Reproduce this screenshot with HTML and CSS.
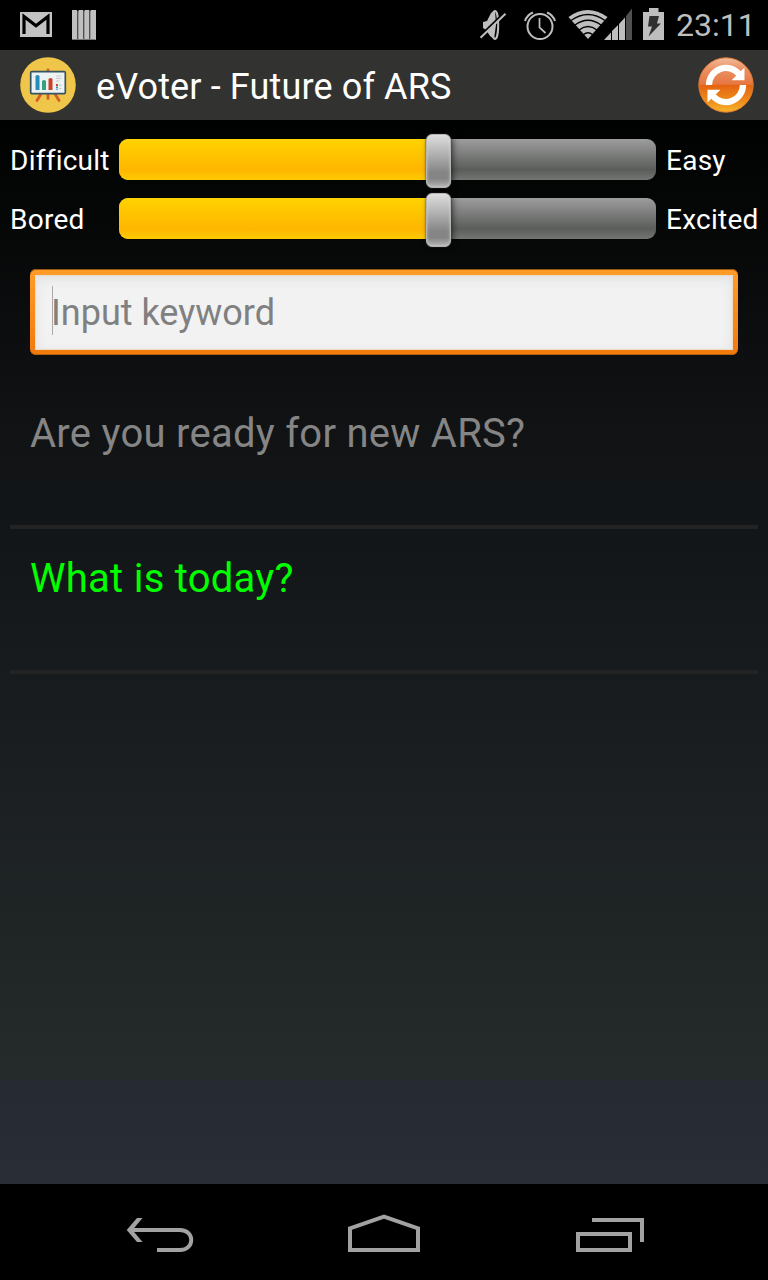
FILE: index.html
```
<!DOCTYPE html>
<html lang="en">
<head>
<meta charset="utf-8">
<title>eVoter - Future of ARS</title>
<link rel="stylesheet" href="styles.css">
</head>
<body>
<header class="status">
  <svg class="status-left" width="120" height="50" viewBox="0 0 120 50">
    <path fill="#c3c3c3" d="M20 12h32v25H20z"/>
    <path d="M24 34V16.500l12 9.300 12-9.300V34" fill="none" stroke="#000" stroke-width="3.200"/>
    <path fill="#c0c0c0" d="M72 10h4.500l1.500 1.500 1-1.500h4l1 1.500 1-1.500h4l1 1.500 1-1.500h5v30H72z"/>
    <path d="M77.700 11v29M83.700 11v29M89.700 11v29" stroke="#4c4c4c" stroke-width="1.300"/>
    <path d="M72 39.500h23.500" stroke="#777"/>
  </svg>
  <svg class="status-right" width="196" height="50" viewBox="470 0 196 50">
    <g fill="none" stroke="#bebebe">
      <path fill="#bebebe" stroke="none" d="M483 22l4-1 4-8 4-3 1 15-2 14-4-3-4-6-3-2z"/>
      <ellipse cx="495" cy="25" rx="3.200" ry="14" stroke-width="2"/>
      <path d="M479.500 36.500L504.500 12.500" stroke="#000" stroke-width="2"/>
      <path d="M480.500 37.700L505.500 13.700" stroke-width="2"/>
      <circle cx="540" cy="26.500" r="12.500" stroke-width="2"/>
      <path d="M539.500 18v9.500l6 5.500" stroke-width="1.700"/>
      <path d="M525 21q2-6 8-8.500M555 21q-2-6-8-8.500" stroke-width="2"/>
    </g>
    <path fill="#bebebe" d="M568.500 17Q587.500 3 607.500 17L588 39z"/>
    <g fill="none" stroke="#000" stroke-width="1.500">
      <path d="M571 20.500Q588 8.500 605 20.500M575 25Q588 15.500 601 25M579 30Q588 23 597 30M583.500 34.500Q588 31 592.500 34.500"/>
    </g>
    <path fill="#bebebe" d="M604 40l7-7.500V40zM612 31l6-6v15h-6zM619 24l6-6.500V40h-6z"/>
    <path fill="#505050" d="M626 16l6-7.500V40h-6z"/>
    <path fill="#bebebe" d="M643 12h6V8h9.500v4h5.500v28h-21z"/>
    <path fill="#303030" d="M649.500 16h9.500l-2 7.500h4L648.500 36.500l3.500-10h-4z"/>
  </svg>
  <span class="clock">23:11</span>
</header>
<div class="actionbar">
  <svg width="56" height="56" viewBox="0 0 56 56">
    <circle cx="28" cy="28" r="27.800" fill="#efc54a"/>
    <path d="M28 13v5M21.500 36l-4.500 7.500M28 35v6.500M34.500 36l4.500 7.500" stroke="#d55f2b" stroke-width="2.800" stroke-linecap="round"/>
    <rect x="10.700" y="14.700" width="34.600" height="21.900" rx="1" fill="#edf3f3" stroke="#355566" stroke-width="1.700"/>
    <path fill="#258cbb" d="M15.500 19q2-2 4 0v14h-4z"/>
    <path fill="#3a9e81" d="M22 24q2-2 4 0v9h-4z"/>
    <path fill="#cb402b" d="M28.500 22q2-2 4 0v11h-4z"/>
    <path d="M36 19h5.500M36 21.500h5.500M36 24h3.500M39 28.300h2.500M39 31.500h2.500" stroke="#c5c9cb" stroke-width="1.200"/>
    <path fill="#d94332" d="M36 27h2v2h-2z"/><path fill="#3a9e91" d="M36 29.500h2v1.500h-2z"/><path fill="#6faed0" d="M36 31.500h2V33h-2z"/>
  </svg>
  <h1 class="title">eVoter - Future of ARS</h1>
  <svg width="56" height="56" viewBox="0 0 56 56">
    <defs>
      <linearGradient id="orb" x2="0" y2="1"><stop stop-color="#f1bd9e"/><stop offset=".2" stop-color="#eb9164"/><stop offset=".48" stop-color="#e77841"/><stop offset=".51" stop-color="#e56412"/><stop offset=".8" stop-color="#ee8e1b"/><stop offset="1" stop-color="#f7b62b"/></linearGradient>
    </defs>
    <circle cx="28" cy="28" r="27.200" fill="url(#orb)" stroke="#df7a35" stroke-width="1"/>
    <g id="arc"><path d="M11 28A17 17 0 0 1 41 17" fill="none" stroke="#fff" stroke-width="6.300"/><path fill="#fff" d="M46.500 10.500V23.300H33.500z"/></g>
    <use href="#arc" transform="rotate(180 28 28)"/>
  </svg>
</div>
<main class="content">
  <section class="sliders">
    <div class="row"><span class="label">Difficult</span><div class="track"><i class="fill"></i><i class="thumb"></i></div><span class="label">Easy</span></div>
    <div class="row"><span class="label">Bored</span><div class="track"><i class="fill"></i><i class="thumb"></i></div><span class="label">Excited</span></div>
  </section>
  <div class="field"><div class="field-inner"><span class="cursor"></span><span class="hint">Input keyword</span></div></div>
  <div class="list">
    <div class="question">Are you ready for new ARS?</div>
    <div class="question active">What is today?</div>
  </div>
</main>
<nav class="navbar">
  <svg width="768" height="96" viewBox="0 0 768 96" fill="none" stroke="#a2a2a2" stroke-width="4">
    <path d="M130 46h50c15 0 15 20 0 20h-23"/>
    <path fill="#a2a2a2" stroke="none" d="M126.700 46L137 34h5.500L132.500 46l10 12H137z"/>
    <path d="M350 66V44.400l34-11.800 34 11.800V66z"/>
    <path d="M578 50h52v16h-52zM592 36h50v22"/>
  </svg>
</nav>
</body>
</html>
```
FILE: styles.css
```
body {
  margin: 0;
  width: 768px;
  height: 1280px;
  display: flex;
  flex-direction: column;
  overflow: hidden;
  background: #000;
  color: #fff;
  font-family: Roboto, sans-serif;
}
svg { display: block; flex: none; }
span { white-space: nowrap; }
.status { display: flex; height: 50px; }
.status-right { margin-left: 350px; }
.clock {
  margin-left: 10px;
  font-size: 32px;
  line-height: 50px;
  color: #bebebe;
}
.actionbar {
  height: 70px;
  box-sizing: border-box;
  display: flex;
  align-items: center;
  padding: 0 14px 0 20px;
  background: #323230;
}
.title {
  flex: 1;
  margin: 4px 0 0 20px;
  font-size: 36px;
  font-weight: 400;
  line-height: 42px;
  letter-spacing: .14px;
}
.content {
  height: 1064px;
  box-sizing: border-box;
  padding: 11px 10px 0;
  background: linear-gradient(#000201 0, #101214 300px, #171b1d 550px, #252a2b 960px, #262a33 961px, #292d35 1064px);
}
.sliders { height: 118px; }
.row {
  height: 59px;
  display: grid;
  grid-template-columns: 99px 537px 91px;
  column-gap: 10px;
  align-items: center;
}
.label { font-size: 28px; line-height: 34px; letter-spacing: .25px; }
.track {
  height: 41px;
  margin-bottom: 2px;
  position: relative;
  border-radius: 9px;
  background: linear-gradient(#9d9d9d, #5a5d5a 75%, #747673);
}
.fill {
  display: block;
  width: 320px;
  height: 41px;
  border-radius: 9px 0 0 9px;
  background: linear-gradient(#ffd300, #ffb600 75%, #ffcb00);
}
.thumb {
  position: absolute;
  left: 307px;
  top: -5px;
  width: 25px;
  height: 54px;
  box-sizing: border-box;
  border: 1px solid #b5b5b5;
  border-radius: 6px;
  background: linear-gradient(#dedede, #858585 72%, #858585 84%, #b4b4b4);
  box-shadow: 0 0 2px #333, 2px 1px 6px rgba(0, 0, 0, .55), inset 0 0 3px rgba(230, 230, 230, .6);
}
.field {
  margin: 20px 20px 0;
  height: 86px;
  box-sizing: border-box;
  padding: 6px 5px 5px;
  border-radius: 6px;
  background: linear-gradient(#ff9c28, #f27a0c);
  box-shadow: inset 0 1px #965411, inset 0 -1px #b8620f;
}
.field-inner {
  height: 75px;
  display: flex;
  align-items: center;
  padding-left: 17px;
  box-sizing: border-box;
  background: #f2f2f2;
  box-shadow: inset 0 3px 12px #dedede, inset 0 0 1px 1px #f5d9b6;
}
.cursor { width: 1px; height: 49px; margin-bottom: 4px; background: #aaa; }
.hint { font-size: 36px; color: #808080; margin-left: -2px; line-height: 44px; }
.question {
  height: 145px;
  box-sizing: border-box;
  padding: 26px 20px 0;
  border-bottom: 4px solid #232323;
  font-size: 40px;
  line-height: 48px;
  color: #858585;
  letter-spacing: .27px;
}
.list { padding-top: 29px; }
.question.active { color: #0f0; }
.navbar { height: 96px; background: #000; }
```
